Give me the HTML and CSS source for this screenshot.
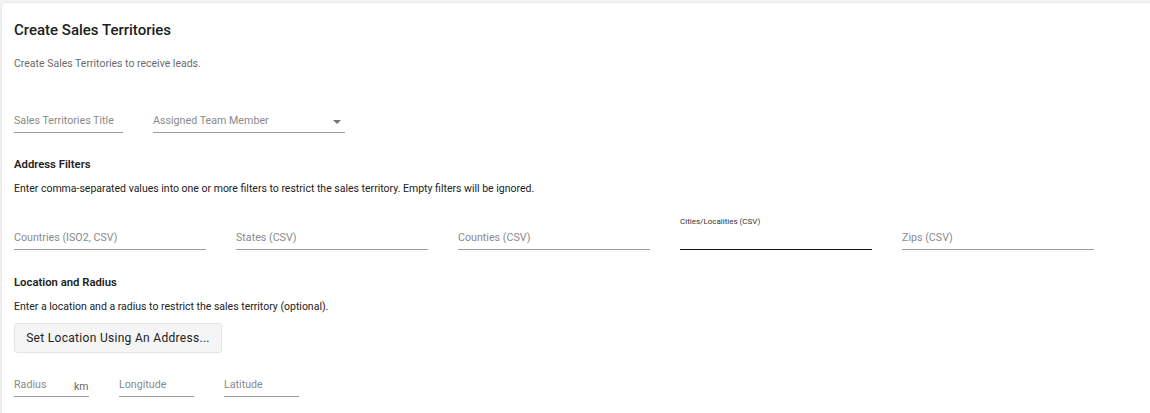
FILE: index.html
```html
<!DOCTYPE HTML>
<html>
    <head>
        <link rel="stylesheet" href="styles.css">
    </head>
    <body>
        <div class="card">
            <h1 class="title">Create Sales Territories</h1>
            <p class="subtitle">Create Sales Territories to receive leads.</p>

            <div class="row top-row">
                <div class="field w-title"><span class="label">Sales Territories Title</span></div>
                <div class="field w-member">
                    <span class="label">Assigned Team Member</span>
                    <span class="caret"></span>
                </div>
            </div>

            <h2 class="section">Address Filters</h2>
            <p class="desc">Enter comma-separated values into one or more filters to restrict the sales territory. Empty filters will be ignored.</p>

            <div class="row filters">
                <div class="field w-filter"><span class="label">Countries (ISO2, CSV)</span></div>
                <div class="field w-filter"><span class="label">States (CSV)</span></div>
                <div class="field w-filter"><span class="label">Counties (CSV)</span></div>
                <div class="field w-filter focused"><span class="label float">Cities/Localities (CSV)</span></div>
                <div class="field w-filter"><span class="label">Zips (CSV)</span></div>
            </div>

            <h2 class="section loc">Location and Radius</h2>
            <p class="desc">Enter a location and a radius to restrict the sales territory (optional).</p>

            <button class="btn">Set Location Using An Address...</button>

            <div class="row coords">
                <div class="field w-small">
                    <span class="label">Radius</span>
                    <span class="suffix">km</span>
                </div>
                <div class="field w-small"><span class="label">Longitude</span></div>
                <div class="field w-small"><span class="label">Latitude</span></div>
            </div>
        </div>
    </body>
</html>
```

FILE: styles.css
```css
* {
    margin: 0;
    padding: 0;
    box-sizing: border-box;
}

body {
    background-color: #f2f2f2;
    font-family: Roboto, "Liberation Sans", sans-serif;
    padding: 3px 0 0 2px;
    height: 413px;
    overflow: hidden;
}

.card {
    background-color: #fff;
    border-radius: 4px 0 0 0;
    box-shadow: 0 0 2px rgba(0, 0, 0, 0.12);
    height: 420px;
    padding: 19px 12px 0 12px;
}

.title {
    font-size: 15px;
    font-weight: 500;
    color: #212121;
    line-height: 17px;
}

.subtitle {
    font-size: 10.5px;
    color: #6b6b6b;
    margin-top: 19px;
    line-height: 12px;
}

.row {
    display: flex;
    gap: 30px;
}

.top-row {
    margin-top: 45px;
}

.field {
    position: relative;
    height: 18px;
    border-bottom: 1px solid #9e9e9e;
    display: flex;
    align-items: flex-start;
}

.label {
    font-size: 10.7px;
    color: #8a8a8a;
    line-height: 12px;
}

.w-title {
    width: 109px;
}

.w-member {
    width: 192px;
}

.caret {
    position: absolute;
    right: 4px;
    top: 5px;
    width: 0;
    height: 0;
    border-left: 4px solid transparent;
    border-right: 4px solid transparent;
    border-top: 4px solid #757575;
}

.section {
    font-size: 11.3px;
    font-weight: 600;
    color: #222;
    margin-top: 25px;
    line-height: 13px;
}

.section.loc {
    margin-top: 26px;
}

.desc {
    font-size: 10.5px;
    color: #222;
    margin-top: 11px;
    line-height: 13px;
}

.filters {
    margin-top: 37px;
}

.w-filter {
    width: 192px;
}

.focused {
    border-bottom: 1.5px solid #111;
}

.label.float {
    position: absolute;
    top: -16px;
    font-size: 8px;
    color: #333;
}

.btn {
    display: block;
    margin-top: 10px;
    width: 208px;
    height: 30px;
    font-family: Roboto, "Liberation Sans", sans-serif;
    font-size: 12px;
    letter-spacing: 0.3px;
    color: #222;
    background-color: #f5f5f5;
    border: 1px solid #e4e4e4;
    border-radius: 3px;
}

.coords {
    margin-top: 26px;
}

.w-small {
    width: 75px;
}

.suffix {
    position: absolute;
    left: 60px;
    top: 1px;
    font-size: 10.5px;
    color: #666;
}
```
